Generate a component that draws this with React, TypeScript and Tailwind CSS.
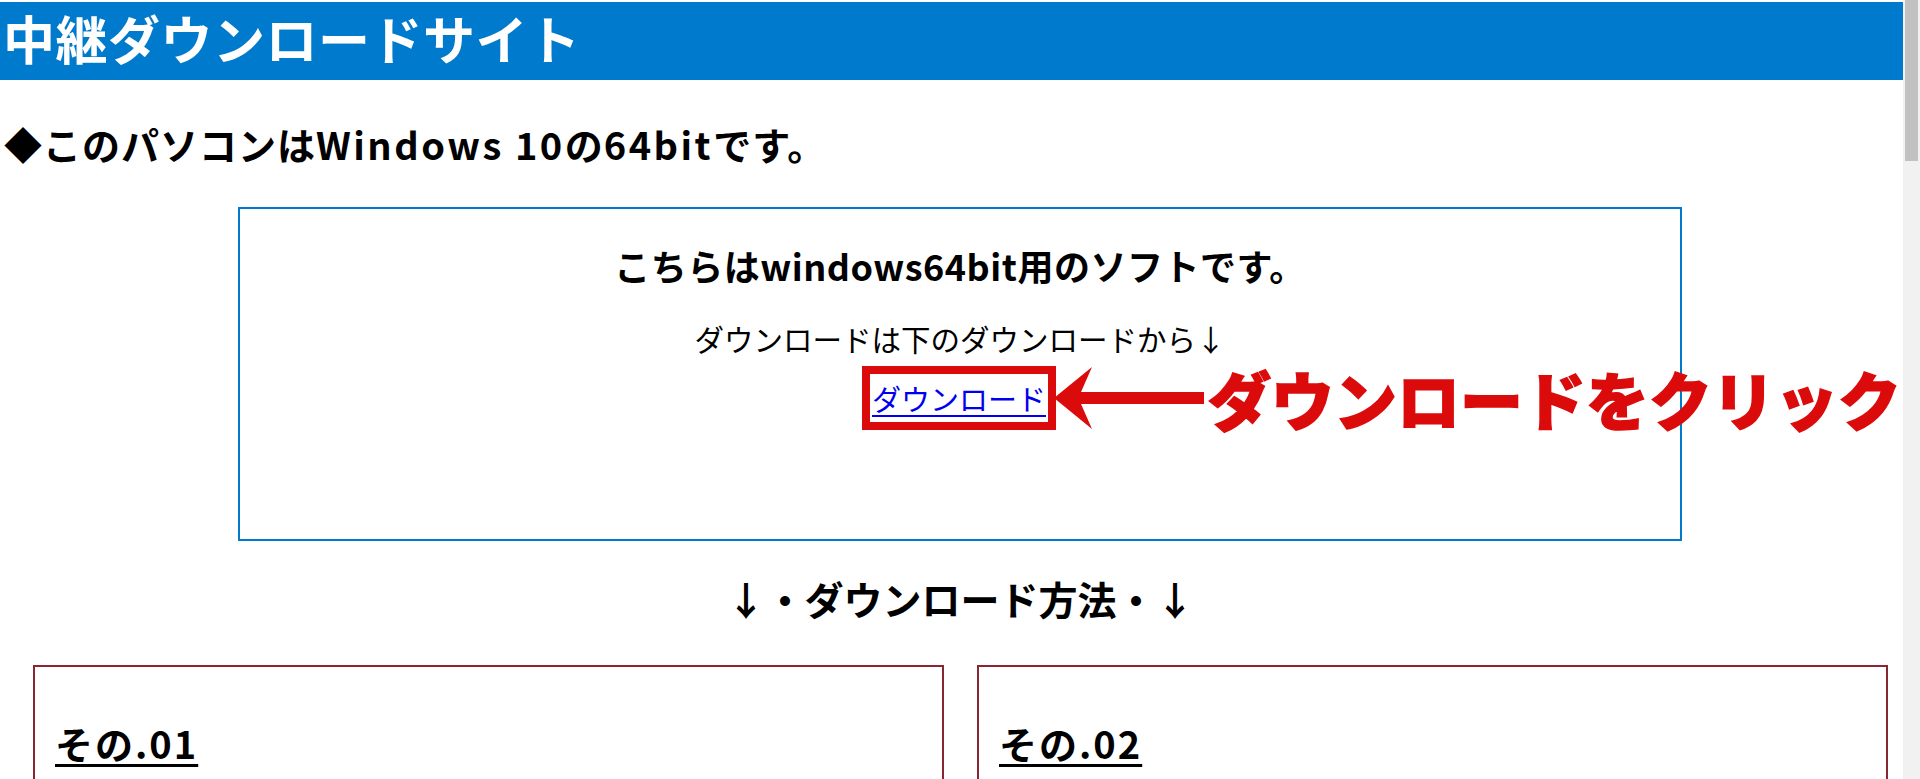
import React from "react";

const FONT = "font-['Noto_Sans_CJK_JP',sans-serif]";

function ClickArrow() {
  return (
    <svg width="150" height="62" viewBox="0 0 150 62" aria-hidden className="shrink-0">
      <polygon points="0,31 38,0 27,25 150,25 150,37 27,37 38,62" fill="#dc0b0b" />
    </svg>
  );
}

function MethodCard({ label }: { label: string }) {
  return (
    <div className="w-[911px] h-[300px] shrink-0 border-2 border-[#8b2532] pt-[53px] pl-[20px]">
      <h3 className="text-[38px] leading-[46px] font-bold tracking-[2px] text-black underline underline-offset-[5px] decoration-[3px]">
        {label}
      </h3>
    </div>
  );
}

export default function App() {
  return (
    <div className={`${FONT} flex h-[779px] w-full overflow-hidden bg-white text-black`}>
      <main className="w-[1903px] shrink-0 overflow-hidden">
        <header className="mt-[2px] h-[78px] bg-[#007acc] pl-[3px] pb-[6px]">
          <h1 className="text-[52px] leading-[72px] font-bold tracking-[0.5px] text-white">中継ダウンロードサイト</h1>
        </header>

        <h2 className="mt-[40px] pl-[4px] text-[38px] leading-[48px] font-bold tracking-[1px]">
          ◆このパソコンは<span className="tracking-[2.5px]">Windows 10</span>の
          <span className="tracking-[2.5px]">64bit</span>です。
        </h2>

        <section className="ml-[238px] mt-[39px] h-[334px] w-[1444px] border-2 border-[#007acc] text-center">
          <p className="mt-[34px] text-[36px] leading-[44px] font-bold tracking-[0.5px]">
            こちらはwindows64bit用のソフトです。
          </p>
          <p className="mt-[33px] text-[29.5px] leading-[36px]">ダウンロードは下のダウンロードから↓</p>
          <div className="mt-[10px] flex justify-center">
            <div className="relative ml-[-2px] flex h-[64px] w-[194px] items-center justify-center border-8 border-[#dc0b0b]">
              <a href="#" className="text-[29px] leading-[36px] text-[#0000ee] underline underline-offset-[4px]">
                ダウンロード
              </a>
              <div className="absolute left-[calc(100%+6px)] top-[-8px] flex h-[64px] items-center gap-[4px] whitespace-nowrap">
                <ClickArrow />
                <span className="text-[63px] leading-[64px] font-black text-[#dc0b0b] [-webkit-text-stroke:1.5px_#dc0b0b]">
                  ダウンロードをクリック
                </span>
              </div>
            </div>
          </div>
        </section>

        <h2 className="mt-[32px] pl-[18px] text-center text-[39px] leading-[50px] font-bold">↓・ダウンロード方法・↓</h2>

        <div className="mt-[42px] ml-[33px] flex gap-[33px]">
          <MethodCard label="その.01" />
          <MethodCard label="その.02" />
        </div>
      </main>
      <div className="w-[17px] shrink-0 bg-[#f1f1f1] px-[2px]">
        <div className="h-[161px] w-full bg-[#c1c1c1]" />
      </div>
    </div>
  );
}
